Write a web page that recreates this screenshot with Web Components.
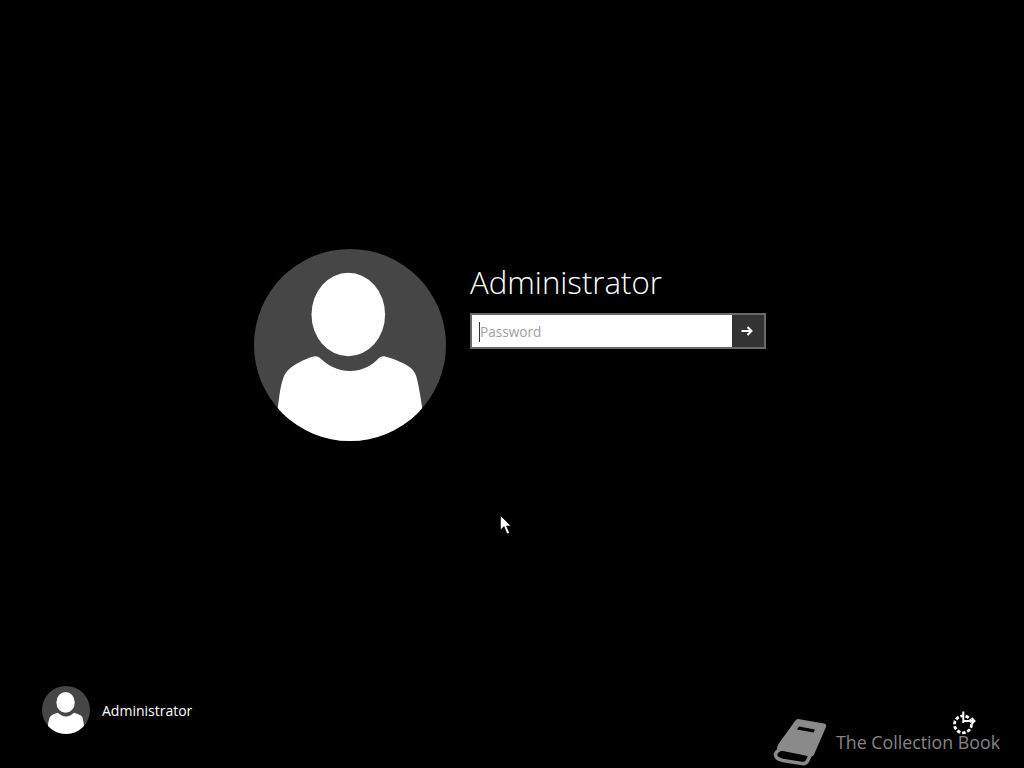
<!DOCTYPE html>
<html><head><meta charset="utf-8"><title>Sign in</title>
<style>html,body{margin:0;padding:0;background:#000;}</style></head>
<body>
<login-screen></login-screen>
<script>
function def(name, html){
  customElements.define(name, class extends HTMLElement{
    constructor(){super();this.attachShadow({mode:'open'}).innerHTML=html(this);}
  });
}
def('user-avatar', el=>`<style>:host{display:block;width:var(--size,192px);height:var(--size,192px);flex:none}svg{display:block;width:100%;height:100%}</style>
<svg viewBox="0 0 192 192"><defs><clipPath id="c"><circle cx="96" cy="96" r="96"/></clipPath></defs>
<circle cx="96" cy="96" r="96" fill="#464646"/>
<g clip-path="url(#c)" fill="#fff"><ellipse cx="94.3" cy="65.5" rx="36.8" ry="41.7"/>
<path d="M23 165 C25 150 26 138 29 130 C31 122 38 117 46 113 C50 111 56 108 60 107.500 C63 107 65 108 67 110 C74 116 83 122 96 122 C109 122 118 116 124 110 C126 108 128 107 131 107.500 C137 109 148 113 154 117 C159 120 162 125 163 130 C165 138 167 150 169 165 L169 192 L23 192 Z"/></g></svg>`);
def('password-box', el=>`<style>:host{display:flex;width:296px;height:36px;box-sizing:border-box;border:2px solid #696969;background:#333}
.f{flex:1;background:#fff;display:flex;align-items:center;padding-left:8px;position:relative;font:400 13.6px "Open Sans",sans-serif;color:#a0a0a0}
.c{position:absolute;left:7px;top:7px;width:1px;height:20px;background:#333}
.b{width:32px;display:flex;align-items:center;justify-content:center;padding-right:2px;box-sizing:border-box}svg{display:block}</style>
<div class="f"><i class="c"></i><span>Password</span></div>
<div class="b"><svg width="14" height="12" viewBox="0 0 14 12"><path d="M1.500 6H11M7.500 2l4 4-4 4" fill="none" stroke="#fff" stroke-width="2"/></svg></div>`);
def('user-tile', el=>`<style>:host{display:flex;gap:24px;align-items:flex-start}
.i{padding-top:12px;display:flex;flex-direction:column;gap:9px}
h1{margin:0;font:300 31.2px/43px "Open Sans",sans-serif;color:#fff}</style>
<user-avatar></user-avatar><div class="i"><h1>Administrator</h1><password-box></password-box></div>`);
def('user-chip', el=>`<style>:host{display:flex;align-items:center;gap:12px;--size:48px;font:400 14px "Open Sans",sans-serif;color:#fff}</style>
<user-avatar></user-avatar><span>Administrator</span>`);
def('book-mark', el=>`<style>:host{display:flex;align-items:flex-start;gap:9px}
svg{display:block;flex:none}span{font:400 17.8px/24px "Open Sans",sans-serif;margin-top:12px;white-space:nowrap;color:#858585}</style>
<svg width="54" height="48" viewBox="4 6 54 48">
<path fill="#8a8a8a" fill-rule="evenodd" d="M29 7 L55 11.500 Q58 12 57 15 L45.500 41.500 Q44.500 45 41 44.500 L14 39 Q11 38.500 10 40 L8 39 Q7.500 35 9.500 32 L26 9 Q27.500 7 29 7 Z M30 14.500 L46 17.500 L44.500 20.500 L28 17.500 Z"/>
<path fill="none" stroke="#8a8a8a" stroke-width="3.600" d="M10 38 Q4 42 8 46 Q10 47.500 14 48.500 L33 51.500 Q37 52 38.500 49 L50.500 24 L52 19"/></svg>
<span>The Collection Book</span>`);
def('shutdown-icon', el=>`<style>:host{position:absolute;left:950px;top:708px;width:30px;height:30px}svg{display:block}</style>
<svg width="30" height="30" viewBox="0 0 30 30"><circle cx="13" cy="16.300" r="8.500" fill="none" stroke="#fff" stroke-width="2.800" stroke-dasharray="3.500 1.800"/>
<path d="M13.300 3.500V15M13 13H24.500M21.500 10l3 3-3 3" fill="none" stroke="#fff" stroke-width="2"/></svg>`);
def('mouse-pointer', el=>`<style>:host{position:absolute;left:499.500px;top:515px;width:12px;height:20px}svg{display:block}</style>
<svg width="12" height="20" viewBox="0 0 12 20"><path d="M.5 .5V15L4 11.500 7 19 9.500 18 6.500 11H11Z" fill="#fff" stroke="#000" stroke-width=".6"/></svg>`);
def('login-screen', el=>`<style>:host{display:flex;flex-direction:column;justify-content:space-between;position:relative;width:1024px;height:768px;background:#000;overflow:hidden;box-sizing:border-box;padding:249px 24px 2px 42px}
user-tile{margin-left:212px}
.foot{display:flex;justify-content:space-between;align-items:flex-end}
user-chip{margin-bottom:32px}</style>
<user-tile></user-tile>
<div class="foot"><user-chip></user-chip><book-mark></book-mark></div>
<shutdown-icon></shutdown-icon><mouse-pointer></mouse-pointer>`);
</script>
</body></html>
